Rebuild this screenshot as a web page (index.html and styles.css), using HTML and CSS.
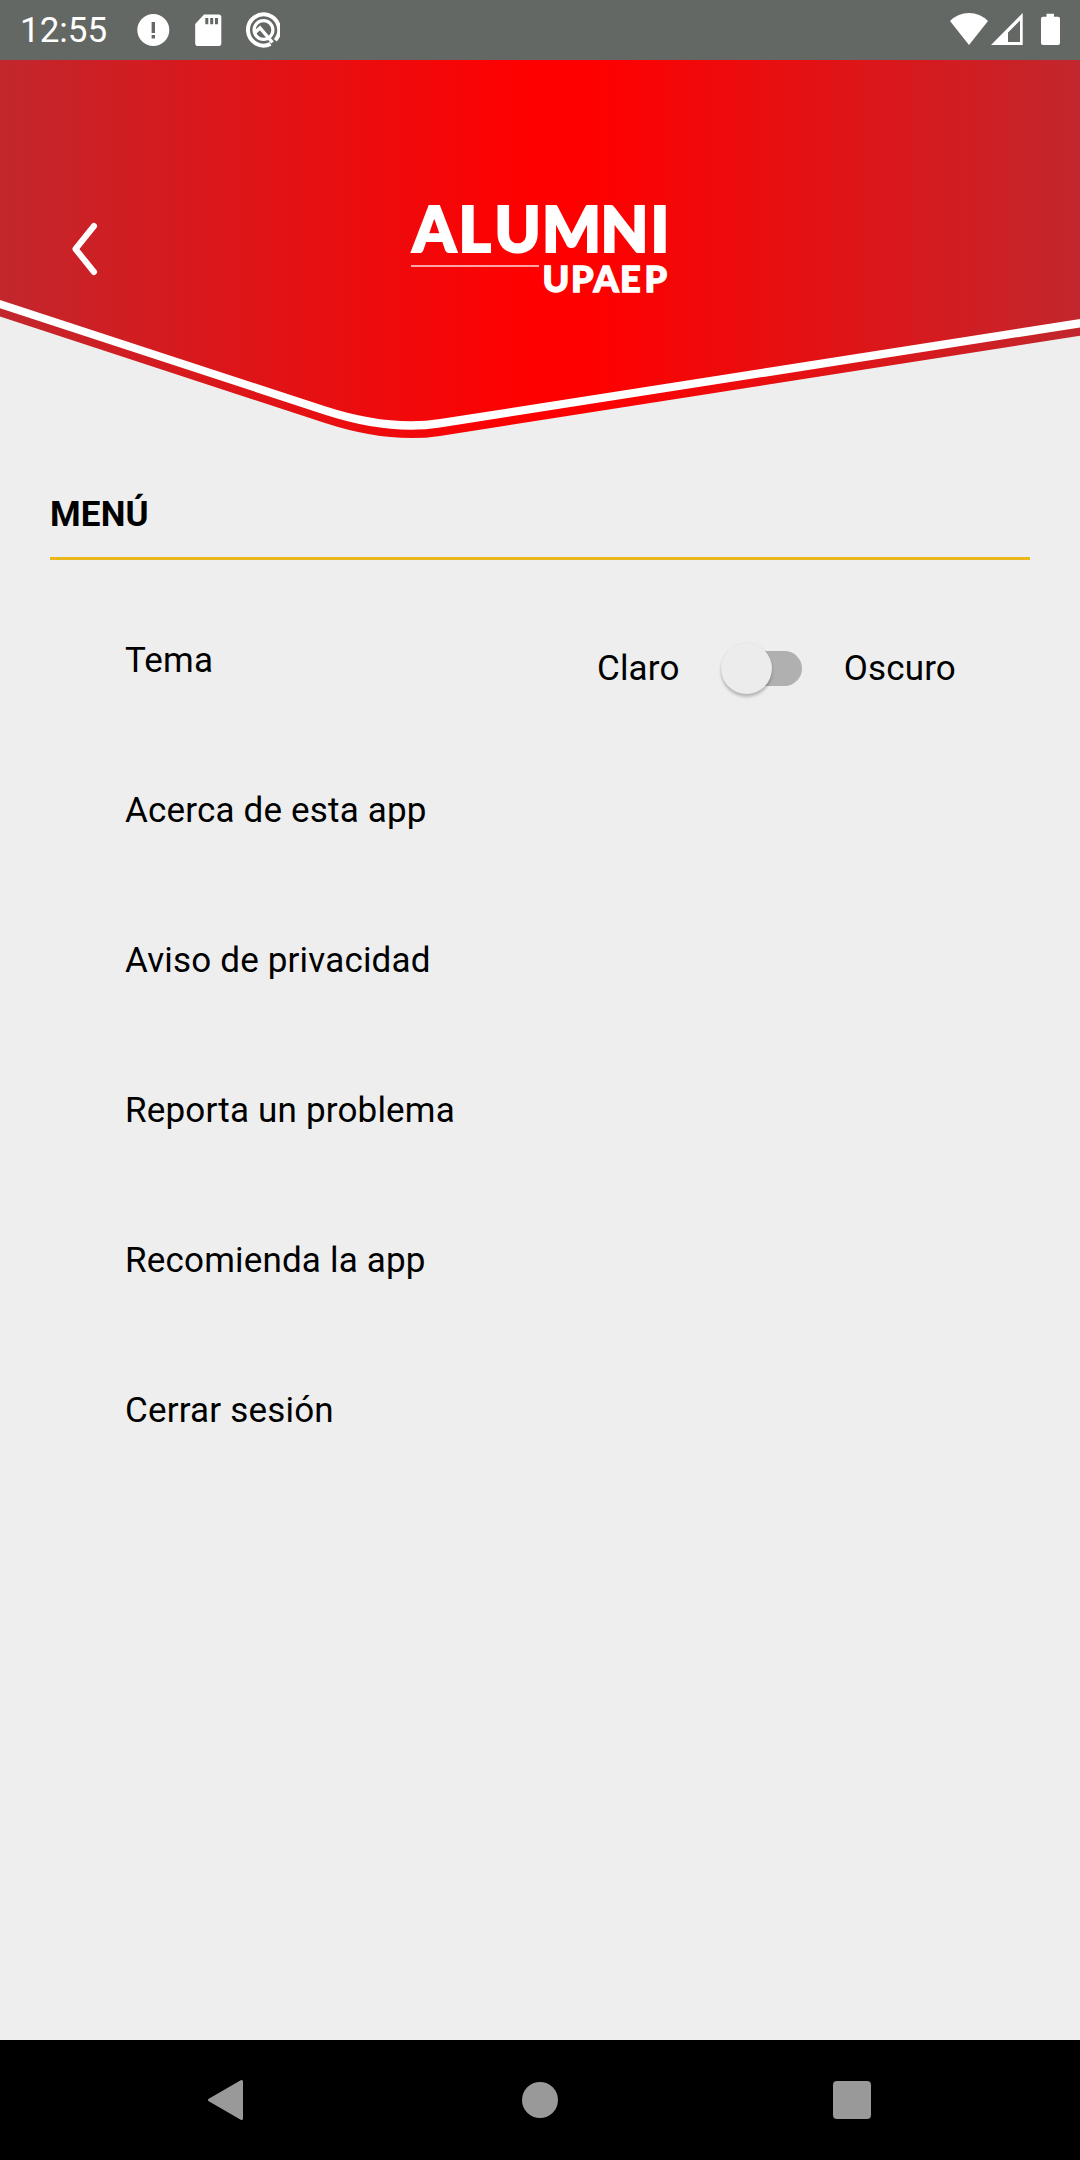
FILE: index.html
```html
<!DOCTYPE html>
<html lang="es">
<head>
<meta charset="utf-8">
<title>Alumni UPAEP</title>
<link rel="stylesheet" href="styles.css">
</head>
<body>
<div class="screen">
  <div class="status">
    <span class="clock">12:55</span>
    <svg class="status-left" width="150" height="60" viewBox="130 0 150 60">
      <circle cx="153.3" cy="30" r="16" fill="#fff"/>
      <path d="M151.6 22h3.4v11h-3.4zM151.6 35h3.4v3.4h-3.4z" fill="#646864"/>
      <path d="M204 14.5h14.5q2.8 0 2.8 2.8v26q0 2.8-2.8 2.8h-20.5q-2.8 0-2.8-2.8V24z" fill="#fff"/>
      <path d="M205.3 18h3v6.3h-3zM210.2 18h3v6.3h-3zM215 18h3v6.3h-3z" fill="#646864"/>
      <g fill="none" stroke="#fff">
        <path d="M275.300 40.200A15.600 15.600 0 1 0 270.500 43.900" stroke-width="4"/>
        <circle cx="263.500" cy="30" r="9.400" stroke-width="3.200"/>
        <path d="M255 32.500l5-4.500 12.500 14.500" stroke-width="3.400"/>
      </g>
    </svg>
    <svg class="status-right" width="130" height="60" viewBox="940 0 130 60" fill="#fff">
      <path d="M950 21Q958 13 969 13T988 21L969 45z"/>
      <path fill-rule="evenodd" d="M1022.7 13V45H991zM1020 20.500L1008 32.500V42h12z"/>
      <path d="M1046.5 13.7h7.500v3h4q2 0 2 2V43q0 2-2 2h-15q-2 0-2-2V18.700q0-2 2-2h3.500z"/>
    </svg>
  </div>

  <header class="header">
    <svg class="header-shape" width="1080" height="380" viewBox="0 60 1080 380">
      <defs>
        <linearGradient id="red" gradientUnits="userSpaceOnUse" x1="0" y1="0" x2="1080" y2="0">
          <stop offset="0" stop-color="#c1272d"/>
          <stop offset=".49" stop-color="#ff0000"/>
          <stop offset=".55" stop-color="#ff0000"/>
          <stop offset="1" stop-color="#c1272d"/>
        </linearGradient>
      </defs>
      <path fill="url(#red)" d="M0 60V316.600L325 423.100Q388.800 443.800 440 435.900L1080 335.800V60z"/>
      <path fill="#fff" d="M0 300V308.300L325 414.700Q388.800 435.400 440 427.500L1080 327.400V319L440 419.100Q388.800 427 325 406.300z"/>
    </svg>
    <div class="header-content">
      <svg class="back" width="30" height="60" viewBox="70 219 30 60">
        <path d="M94 226L75.500 249L94 272" fill="none" stroke="#fff" stroke-width="6" stroke-linecap="round" stroke-linejoin="round"/>
      </svg>
      <svg class="logo" width="270" height="130" viewBox="405 180 270 130">
        <text class="logo-main" y="252.300" x="412.500 458.500 494.500 542 600.500 650.500">ALUMNI</text>
        <path d="M411 266H539" stroke="#fff" stroke-width="1.600" opacity=".85"/>
        <text class="logo-sub" y="291.700" x="542.500 571 593.500 620 644.500">UPAEP</text>
      </svg>
    </div>
  </header>

  <main class="main">
    <h1 class="title">MENÚ</h1>
    <ul class="menu">
      <li class="row">
        <span>Tema</span>
        <div class="theme">
          <span>Claro</span>
          <span class="switch"><span class="thumb"></span></span>
          <span>Oscuro</span>
        </div>
      </li>
      <li class="row">Acerca de esta app</li>
      <li class="row">Aviso de privacidad</li>
      <li class="row">Reporta un problema</li>
      <li class="row">Recomienda la app</li>
      <li class="row">Cerrar sesión</li>
    </ul>
  </main>

  <nav class="nav">
    <svg width="40" height="44" viewBox="206 2078 40 44"><path d="M241.500 2081.500V2118.500L209.500 2100z" fill="#999" stroke="#999" stroke-width="3" stroke-linejoin="round"/></svg>
    <span class="home"></span>
    <span class="recent"></span>
  </nav>
</div>
</body>
</html>
```
FILE: styles.css
```css
* { box-sizing: border-box; }

body {
  margin: 0;
  background: #eee;
  color: #000;
  font-family: Roboto, sans-serif;
  font-size: 35px;
}

.screen {
  display: flex;
  flex-direction: column;
  width: 1080px;
  height: 2160px;
  overflow: hidden;
}

.status {
  display: flex;
  align-items: center;
  height: 60px;
  padding: 0 10px 0 20px;
  background: #646864;
  color: #fff;
}

.clock { width: 110px; padding-top: 2px; line-height: 60px; }
.status-right { margin-left: auto; }

.header { display: grid; height: 380px; }
.header-shape, .header-content { grid-area: 1 / 1; }

.header-content {
  display: flex;
  align-items: flex-start;
  padding: 120px 0 0 70px;
}

.back { margin-top: 39px; }
.logo { margin-left: 305px; }

.logo-main, .logo-sub {
  fill: #fff;
  stroke: #fff;
  font-family: Lato, sans-serif;
  font-weight: 900;
}
.logo-main { font-size: 62px; stroke-width: 2.2px; }
.logo-sub { font-size: 36px; stroke-width: 1.3px; }

.main { flex: 1; padding: 45px 50px 0; }

.title {
  height: 75px;
  margin: 0 0 26px;
  border-bottom: 3px solid #eab71b;
  font-size: 35px;
  font-weight: 700;
  line-height: 60px;
  letter-spacing: 0.2px;
}

.menu { margin: 0; padding: 0; list-style: none; }

.row {
  display: flex;
  justify-content: space-between;
  height: 150px;
  padding: 0 75px;
  line-height: 150px;
  letter-spacing: 0.18px;
}

.theme { display: flex; align-items: center; margin-right: -1px; padding-top: 16px; }

.switch {
  display: flex;
  align-items: center;
  width: 81px;
  height: 35px;
  margin: -1px 42px 0 41px;
  border-radius: 18px;
  background: linear-gradient(90deg, transparent 24px, #b0b0b0 24px);
}

.thumb {
  width: 51px;
  height: 51px;
  flex: none;
  border-radius: 50%;
  background: #ececec;
  box-shadow: 0 3px 3px rgba(0, 0, 0, .22), 0 0 2px rgba(0, 0, 0, .08);
}

.nav {
  display: flex;
  align-items: center;
  justify-content: space-between;
  height: 120px;
  padding: 0 209px 0 206px;
  background: #000;
}

.home { width: 36px; height: 36px; border-radius: 50%; background: #999; }
.recent { width: 38px; height: 38px; border-radius: 4px; background: #999; }
```
